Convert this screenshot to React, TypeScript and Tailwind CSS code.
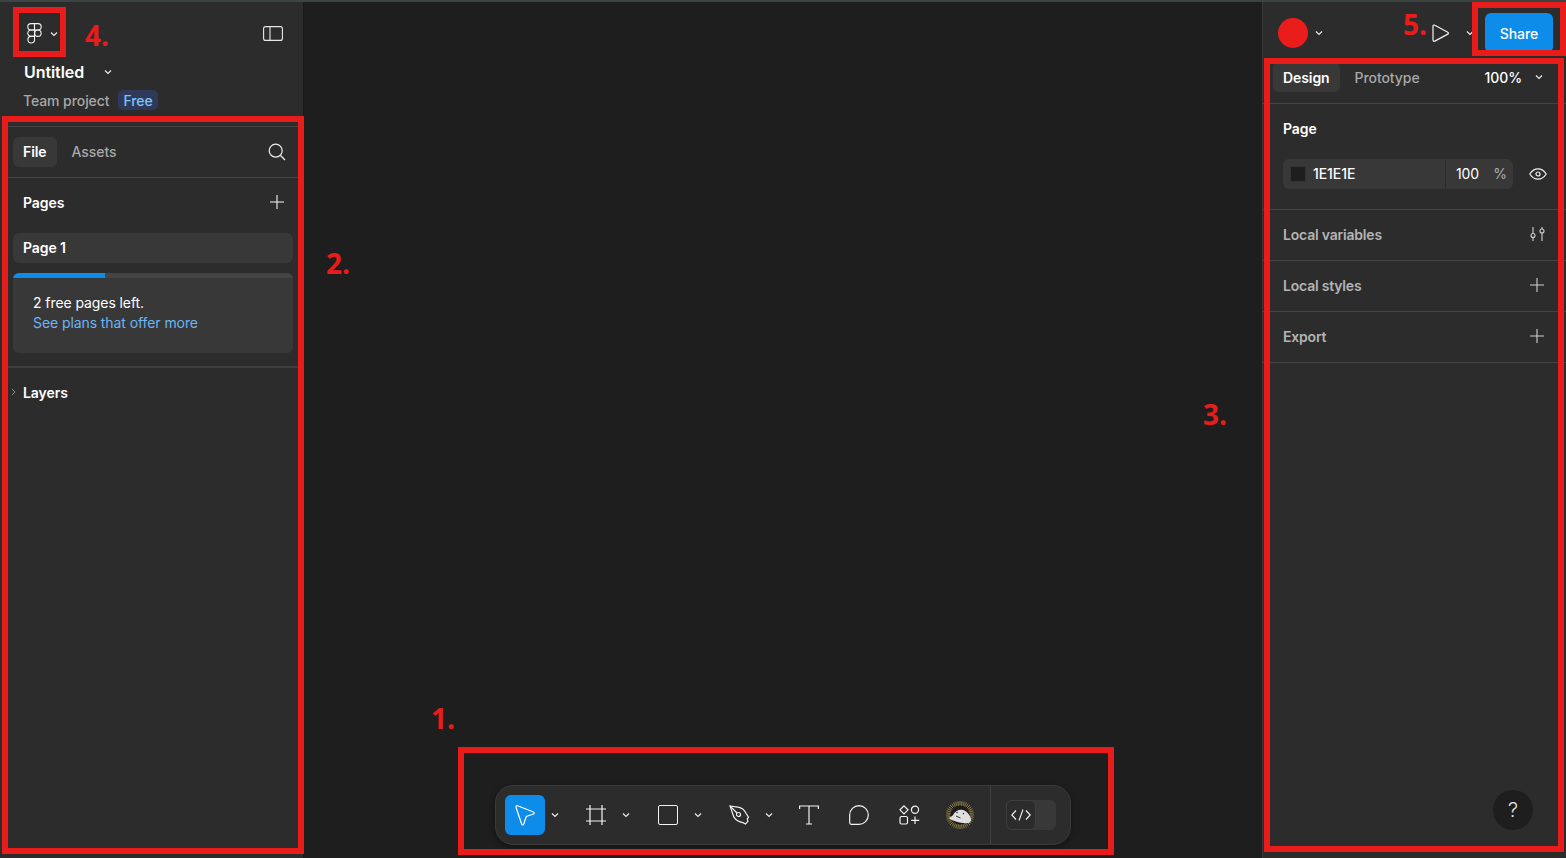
import { ReactNode } from 'react'

const FONT = 'font-["Inter","Liberation_Sans",sans-serif] tracking-[-0.08px]'

function Chevron({ className = '' }: { className?: string }) {
  return (
    <svg width="8" height="6" viewBox="0 0 8 6" fill="none" className={className}>
      <path d="M1 1.500l3 3 3-3" stroke="#f0f0f0" strokeWidth="1.1" />
    </svg>
  )
}

function Plus({ color = '#f5f5f5' }: { color?: string }) {
  return (
    <svg width="14" height="14" viewBox="0 0 14 14" fill="none">
      <path d="M7 0v14M0 7h14" stroke={color} strokeWidth="1.1" />
    </svg>
  )
}

function FigmaLogo() {
  return (
    <svg width="15" height="21" viewBox="0 0 15 21" fill="none" stroke="#f2f2f2" strokeWidth="1.1">
      <path d="M7.500.6H4a3.100 3.100 0 0 0 0 6.400h3.500z" />
      <path d="M7.500.6H11a3.100 3.100 0 0 1 0 6.400H7.500z" />
      <path d="M7.500 7H4a3.200 3.200 0 0 0 0 6.400h3.500z" />
      <circle cx="10.900" cy="10.200" r="3.200" />
      <path d="M7.500 13.400H4a3.300 3.300 0 1 0 3.500 3.300z" />
    </svg>
  )
}

function CursorIcon() {
  return (
    <svg width="22" height="23" viewBox="0 0 22 23" fill="none">
      <path
        d="M2 3.200c-.3-1 .6-1.800 1.500-1.400l16 6.200c1 .4 1 1.700 0 2l-6.600 2.200c-.4.100-.7.400-.8.800l-2.400 7.200c-.3 1-1.700 1-2 0z"
        stroke="#fff"
        strokeWidth="1.2"
      />
    </svg>
  )
}

function FrameIcon() {
  return (
    <svg width="20" height="20" viewBox="0 0 20 20" fill="none" stroke="#f2f2f2" strokeWidth="1.2">
      <path d="M4 0v20M16 0v20M0 4h20M0 16h20" />
    </svg>
  )
}

function PenIcon() {
  return (
    <svg width="21" height="21" viewBox="0 0 21 21" fill="none" stroke="#f2f2f2" strokeWidth="1.2">
      <path d="M1 1l8 1.200c3.500.6 6.500 3 8 6l2.500 4-1.200 1.600.6 2.600-2.400 2.600-2.600-1.400c-4-.6-7-2.400-9-5.400z" />
      <path d="M1 1l7 7" />
      <circle cx="9.500" cy="9.500" r="2" />
    </svg>
  )
}

function TextIcon() {
  return (
    <svg width="20" height="20" viewBox="0 0 20 20" fill="none" stroke="#f2f2f2" strokeWidth="1.2">
      <path d="M.6 4V1h18.800v3M10 1v18M7 19h6" />
    </svg>
  )
}

function CommentIcon() {
  return (
    <svg width="20" height="20" viewBox="0 0 20 20" fill="none" stroke="#f2f2f2" strokeWidth="1.2">
      <path d="M10 .7a9.300 9.300 0 0 1 0 18.600H2.200a1.500 1.500 0 0 1-1.500-1.500V10A9.300 9.300 0 0 1 10 .7z" />
    </svg>
  )
}

function ComponentsIcon() {
  return (
    <svg width="21" height="20" viewBox="0 0 21 20" fill="none" stroke="#f2f2f2" strokeWidth="1.2">
      <path d="M5 .8l4 4-4 4-4-4z" />
      <circle cx="16" cy="4.800" r="3.600" />
      <rect x="1" y="11.500" width="7.500" height="7.500" rx="1.500" />
      <path d="M16 11.500v7.500M12.200 15.300h8" />
    </svg>
  )
}

function MascotIcon() {
  const rays = Array.from({ length: 40 }, (_, i) => (i * Math.PI) / 20)
  return (
    <svg width="28" height="28" viewBox="0 0 28 28" fill="none">
      <circle cx="14" cy="14" r="10.500" fill="#1b1b1b" />
      {rays.map((a) => (
        <line
          key={a}
          x1={14 + 9.500 * Math.cos(a)}
          y1={14 + 9.500 * Math.sin(a)}
          x2={14 + 14 * Math.cos(a)}
          y2={14 + 14 * Math.sin(a)}
          stroke="#a88f45"
          strokeWidth="0.8"
        />
      ))}
      <path d="M3 17c1-1 3-1.500 4-3 2-4 6-6 10-5 4 1 7 5 8 9 .4 2-1 4-3 4-3 .4-8 0-12-1.500-3-1-6-2-7-3.500z" fill="#dedede" />
      <path d="M10 15l4.500 2" stroke="#222" strokeWidth="0.9" />
      <circle cx="11" cy="11.500" r="0.700" fill="#222" />
      <circle cx="17.500" cy="12.500" r="0.700" fill="#222" />
    </svg>
  )
}

function ToolWithMenu({ icon, active }: { icon: ReactNode; active?: boolean }) {
  return (
    <div className="flex items-center">
      <div
        className={`w-10 h-10 flex items-center justify-center rounded-[6px] ${
          active ? 'bg-[#0d8ce9]' : ''
        }`}
      >
        {icon}
      </div>
      <div className="w-5 flex justify-center">
        <Chevron />
      </div>
    </div>
  )
}

function Tool({ icon }: { icon: ReactNode }) {
  return <div className="w-10 h-10 flex items-center justify-center">{icon}</div>
}

function Toolbar() {
  return (
    <div className="w-[576px] h-[60px] flex items-center rounded-[18px] bg-[#2c2c2c] border border-[#3a3a3a] shadow-[0_2px_6px_rgba(0,0,0,0.4)]">
      <div className="flex items-center gap-[11.4px] pl-[9px]">
        <ToolWithMenu icon={<CursorIcon />} active />
        <ToolWithMenu icon={<FrameIcon />} />
        <ToolWithMenu icon={<div className="w-5 h-5 rounded-[2px] border-[1.2px] border-[#f2f2f2]" />} />
        <ToolWithMenu icon={<PenIcon />} />
      </div>
      <div className="flex items-center gap-[10.4px] ml-[9.8px]">
        <Tool icon={<TextIcon />} />
        <Tool icon={<CommentIcon />} />
        <Tool icon={<ComponentsIcon />} />
        <Tool icon={<MascotIcon />} />
      </div>
      <div className="ml-[10px] h-full w-px bg-[#3f3f3f]" />
      <div className="ml-[15px] w-[50px] h-[30px] rounded-[6px] bg-[#383838]">
        <div className="w-[30px] h-[30px] flex items-center justify-center rounded-[6px] bg-[#2c2c2c] border border-[#3e3e3e]">
          <svg width="20" height="12" viewBox="0 0 20 12" fill="none" stroke="#f2f2f2" strokeWidth="1.1">
            <path d="M5 1.500L.8 6 5 10.500M15 1.500L19.200 6 15 10.500M12 .5L8 11.500" />
          </svg>
        </div>
      </div>
    </div>
  )
}

function LeftPanel() {
  return (
    <aside className="w-[304px] shrink-0 h-full bg-[#2c2c2c] border-r border-[#1a1a1a] flex flex-col pl-[8px] pr-[5px]">
      <div className="h-[124px] shrink-0 -ml-[8px] -mr-[5px] pl-[24px]">
        <div className="h-[60px] pt-[21px] flex items-start -ml-[24px] pl-[27px] pr-[20px]">
          <FigmaLogo />
          <Chevron className="ml-[8px] mt-[8px]" />
          <svg width="20" height="15" viewBox="0 0 20 15" fill="none" stroke="#e8e8e8" strokeWidth="1.1" className="ml-auto mt-[3px]">
            <rect x="0.600" y="0.600" width="18.800" height="13.800" rx="2" />
            <path d="M7 .6v13.800" />
          </svg>
        </div>
        <div className="flex items-center h-[20px]">
          <span className="text-[16px] font-semibold text-white leading-none">Untitled</span>
          <Chevron className="ml-[20px]" />
        </div>
        <div className="flex items-center mt-[8px] h-[20px] -ml-[1px]">
          <span className="text-[14px] font-medium text-[#a8a8a8]">Team project</span>
          <span className="ml-[9px] px-[5px] h-[20px] flex items-center rounded-[5px] bg-[#2f3a5a] text-[14px] font-medium text-[#7cc4f8]">
            Free
          </span>
        </div>
      </div>
      <div className="h-[52px] shrink-0 border-t border-b border-[#444] flex items-center pl-[5px] pr-[12px]">
        <span className="h-[30px] px-[10px] pb-[2px] flex items-center rounded-[6px] bg-[#383838] text-[14px] font-semibold text-white">File</span>
        <span className="ml-[5px] px-[10px] mb-[2px] text-[14px] font-medium text-[#a8a8a8]">Assets</span>
        <svg width="18" height="18" viewBox="0 0 18 18" fill="none" stroke="#f0f0f0" strokeWidth="1.2" className="ml-auto">
          <circle cx="7.700" cy="7.700" r="6.500" />
          <path d="M12.500 12.500L17 17" />
        </svg>
      </div>
      <div className="h-[50px] shrink-0 flex items-center pb-[2px] pl-[15px] pr-[14px] justify-between">
        <span className="text-[14px] font-semibold text-white">Pages</span>
        <Plus />
      </div>
      <div className="ml-[5px] mr-[5px] mt-[5px] h-[30px] shrink-0 flex items-center pb-[2px] pl-[10px] rounded-[6px] bg-[#383838] text-[14px] font-semibold text-white">
        Page 1
      </div>
      <div className="ml-[5px] mr-[5px] mt-[10px] h-[80px] shrink-0 rounded-[6px] bg-[#383838] overflow-hidden">
        <div className="h-[5px] bg-[#444]">
          <div className="h-full w-[92px] bg-[#0d8ce9]" />
        </div>
        <p className="pl-[20px] mt-[15px] text-[14px] leading-[20px] text-white">2 free pages left.</p>
        <p className="pl-[20px] text-[14px] leading-[20px] text-[#6bb5f2]">See plans that offer more</p>
      </div>
      <div className="mt-[13px] border-t-2 border-[#3e3e3e] h-[50px] shrink-0 flex items-center">
        <svg width="5" height="8" viewBox="0 0 5 8" fill="none" className="ml-[3px]">
          <path d="M1 1l3 3-3 3" stroke="#8a8a8a" />
        </svg>
        <span className="ml-[7px] text-[14px] font-semibold text-white">Layers</span>
      </div>
    </aside>
  )
}

function SectionRow({ label, icon }: { label: string; icon: ReactNode }) {
  return (
    <div className="h-[51px] shrink-0 border-b border-[#444] flex items-center justify-between pb-[2px] pl-[20px] pr-[22px]">
      <span className="text-[14px] font-semibold tracking-[-0.2px] text-[#b4b4b4]">{label}</span>
      {icon}
    </div>
  )
}

function RightPanel() {
  return (
    <aside className="w-[304px] shrink-0 h-full bg-[#2c2c2c] border-l border-[#3a3a3a] flex flex-col relative">
      <div className="h-[61px] shrink-0 flex items-start pt-[16px] pl-[15px]">
        <div className="w-[30px] h-[30px] rounded-full bg-[#ea1c1c]" />
        <Chevron className="ml-[7px] mt-[12px]" />
        <svg width="17" height="18" viewBox="0 0 17 18" fill="none" stroke="#f0f0f0" strokeWidth="1.2" className="ml-[109px] mt-[6px]">
          <path d="M1 2.200c0-1 1-1.500 1.800-1l13 7c.8.400.8 1.500 0 1.900l-13 7c-.8.500-1.800 0-1.800-1z" />
        </svg>
        <Chevron className="ml-[17px] mt-[12px]" />
        <div className="ml-[11px] -mt-[5px] w-[68px] h-[40px] flex items-center justify-center rounded-[6px] bg-[#0d8ce9] text-[14px] font-medium text-white">
          Share
        </div>
      </div>
      <div className="h-[41px] shrink-0 border-b border-[#444] flex items-start pl-[10px] pr-[23px]">
        <span className="h-[30px] -mt-[1px] px-[10px] flex items-center rounded-[6px] bg-[#383838] text-[14px] font-semibold text-white">Design</span>
        <span className="ml-[5px] -mt-[1px] h-[30px] px-[10px] flex items-center text-[14px] font-medium text-[#a8a8a8]">Prototype</span>
        <span className="ml-auto -mt-[1px] h-[30px] flex items-center text-[14px] font-medium text-white">100%</span>
        <Chevron className="ml-[13px] mt-[11px]" />
      </div>
      <div className="h-[106px] shrink-0 border-b border-[#444] pl-[20px]">
        <div className="mt-[14px] text-[14px] leading-[22px] font-semibold text-white">Page</div>
        <div className="mt-[19px] flex items-center">
          <div className="w-[230px] h-[30px] flex items-center rounded-[6px] bg-[#383838]">
            <div className="ml-[7px] w-4 h-4 rounded-[2px] bg-[#1e1e1e] border border-[#333]" />
            <span className="ml-[7px] w-[132px] pb-[1px] text-[14px] font-medium text-white">1E1E1E</span>
            <div className="w-px h-full bg-[#2c2c2c]" />
            <span className="ml-[10px] pb-[1px] text-[14px] text-white">100</span>
            <span className="ml-[14px] pb-[1px] text-[14px] text-[#b0b0b0]">%</span>
          </div>
          <svg width="18" height="12" viewBox="0 0 18 12" fill="none" stroke="#f0f0f0" strokeWidth="1.2" className="ml-[16px]">
            <path d="M.8 6C3 2.500 6 .8 9 .8S15 2.500 17.200 6C15 9.500 12 11.200 9 11.200S3 9.500.8 6z" />
            <circle cx="9" cy="6" r="2" />
          </svg>
        </div>
      </div>
      <SectionRow
        label="Local variables"
        icon={
          <svg width="17" height="16" viewBox="0 0 17 16" fill="none" stroke="#d0d0d0" strokeWidth="1.1" className="-mr-[2px]">
            <path d="M4 1v6.500M4 11.500V15M13 1v2M13 7v8" />
            <circle cx="4" cy="9.500" r="2" />
            <circle cx="13" cy="5" r="2" />
          </svg>
        }
      />
      <SectionRow label="Local styles" icon={<Plus color="#d0d0d0" />} />
      <SectionRow label="Export" icon={<Plus color="#d0d0d0" />} />
      <div className="absolute right-[33px] bottom-[28px] w-10 h-10 flex items-center justify-center rounded-full bg-[#1e1e1e] text-[20px] font-light text-[#e0e0e0]">
        ?
      </div>
    </aside>
  )
}

const BOXES = [
  'left-[13px] top-[7px] w-[53px] h-[50px]',
  'left-[2px] top-[116px] w-[302px] h-[738px]',
  'left-[1264px] top-[58px] w-[300px] h-[794px]',
  'left-[1472px] top-[2px] w-[94px] h-[54px]',
  'left-[458px] top-[747px] w-[656px] h-[108px]',
]

const LABELS = [
  { text: '1.', pos: 'left-[431px] top-[701px]' },
  { text: '2.', pos: 'left-[326px] top-[246px]' },
  { text: '3.', pos: 'left-[1203px] top-[397px]' },
  { text: '4.', pos: 'left-[85px] top-[18px]' },
  { text: '5.', pos: 'left-[1403px] top-[7px]' },
]

export default function App() {
  return (
    <div className={`relative w-[1566px] h-[858px] overflow-hidden bg-[#1e1e1e] ${FONT}`}>
      <div className="h-[2px] bg-[#3a4542]" />
      <div className="flex h-[856px]">
        <LeftPanel />
        <main className="flex-1 flex items-end justify-center pb-[13px]">
          <Toolbar />
        </main>
        <RightPanel />
      </div>
      {BOXES.map((box) => (
        <div key={box} className={`absolute border-[6px] border-[#e91c1c] ${box}`} />
      ))}
      {LABELS.map((l) => (
        <span
          key={l.text}
          className={`absolute font-["Open_Sans",sans-serif] text-[28px] leading-[34px] font-bold text-[#e91c1c] ${l.pos}`}
        >
          {l.text}
        </span>
      ))}
    </div>
  )
}
